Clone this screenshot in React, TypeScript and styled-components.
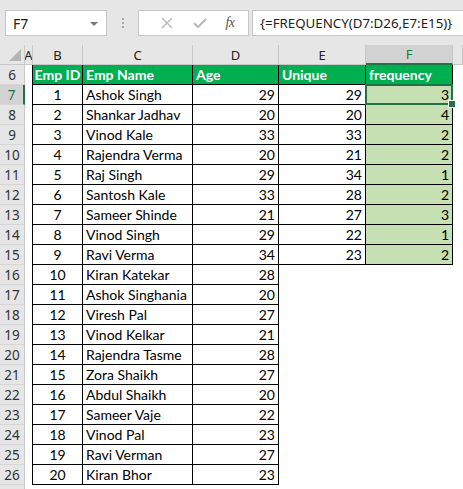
import React from 'react';
import styled, { createGlobalStyle, css } from 'styled-components';

const GlobalStyle = createGlobalStyle`
  html, body {
    margin: 0;
    padding: 0;
    background: #ffffff;
    overflow: hidden;
  }
  * {
    box-sizing: border-box;
  }
`;

const Page = styled.div`
  width: 463px;
  height: 489px;
  overflow: hidden;
  background: #ffffff;
  font-family: Lato, 'Liberation Sans', sans-serif;
`;

const TopBar = styled.div`
  height: 45px;
  background: #e6e6e6;
  display: flex;
  align-items: flex-start;
  padding: 10px 0 0 5px;
`;

const NameBox = styled.div`
  width: 102px;
  height: 26px;
  background: #ffffff;
  border: 1px solid #c6c6c6;
  display: flex;
  align-items: center;
  justify-content: space-between;
  padding: 0 8px 0 7px;
  font-family: 'Noto Sans', 'Open Sans', sans-serif;
  font-size: 14px;
  color: #222;
`;

const DropArrow = styled.span`
  width: 0;
  height: 0;
  border-left: 4px solid transparent;
  border-right: 4px solid transparent;
  border-top: 4px solid #777;
  margin-top: 1px;
`;

const Grip = styled.div`
  width: 31px;
  height: 26px;
  display: flex;
  flex-direction: column;
  align-items: center;
  justify-content: center;
  gap: 2px;
`;

const GripDot = styled.span`
  width: 2px;
  height: 2px;
  background: #a8a8a8;
`;

const ButtonBox = styled.div`
  width: 111px;
  height: 26px;
  background: #ffffff;
  border: 1px solid #c6c6c6;
  display: flex;
  align-items: center;
  padding-left: 12px;
`;

const IconSlot = styled.div<{ w: number }>`
  width: ${p => p.w}px;
  display: flex;
  align-items: center;
  justify-content: center;
`;

const Fx = styled.span`
  font-family: 'Liberation Serif', 'DejaVu Serif', serif;
  font-style: italic;
  font-size: 14px;
  color: #555;
  letter-spacing: -0.5px;
`;

const FormulaBox = styled.div`
  flex: 1;
  margin-left: 3px;
  height: 26px;
  background: #ffffff;
  border: 1px solid #c6c6c6;
  border-right: none;
  display: flex;
  align-items: center;
  padding-left: 7px;
  font-family: 'Noto Sans', 'Open Sans', sans-serif;
  font-size: 13.3px;
  color: #222;
  white-space: nowrap;
`;

const Grid = styled.div`
  display: grid;
  grid-template-columns: 25px 8px 50px 110px 86px 87px 87px 10px;
  grid-auto-rows: 20px;
`;

const ColHead = styled.div<{ active?: boolean }>`
  background: ${p => (p.active ? '#d2d2d2' : '#e6e6e6')};
  border-right: 1px solid #c9c9c9;
  border-bottom: ${p => (p.active ? '2px solid #217346' : '1px solid #c9c9c9')};
  color: ${p => (p.active ? '#217346' : '#222')};
  font-family: 'Noto Sans', 'Open Sans', sans-serif;
  font-size: 13px;
  display: flex;
  align-items: center;
  justify-content: center;
  overflow: hidden;
`;

const Corner = styled.div`
  background: #e6e6e6;
  border-right: 1px solid #c9c9c9;
  border-bottom: 1px solid #c9c9c9;
  position: relative;
  &::after {
    content: '';
    position: absolute;
    right: 3px;
    bottom: 3px;
    width: 0;
    height: 0;
    border-left: 12px solid transparent;
    border-bottom: 12px solid #b5b5b5;
  }
`;

const RowHead = styled.div<{ active?: boolean }>`
  background: ${p => (p.active ? '#d2d2d2' : '#e6e6e6')};
  border-bottom: 1px solid #d6d6d6;
  border-right: ${p => (p.active ? '2px solid #217346' : '1px solid #c9c9c9')};
  color: ${p => (p.active ? '#217346' : '#333')};
  font-family: 'Noto Sans', 'Open Sans', sans-serif;
  font-size: 13.5px;
  display: flex;
  align-items: center;
  justify-content: center;
`;

type Align = 'left' | 'center' | 'right';

const Cell = styled.div<{
  align?: Align;
  boxed?: boolean;
  head?: boolean;
  fill?: string;
  edge?: boolean;
  selected?: boolean;
}>`
  position: relative;
  display: flex;
  align-items: center;
  justify-content: ${p =>
    p.align === 'right' ? 'flex-end' : p.align === 'center' ? 'center' : 'flex-start'};
  padding: 0 3px;
  font-size: 14px;
  color: #000;
  white-space: nowrap;
  overflow: visible;
  background: ${p => p.fill || '#ffffff'};
  ${p =>
    p.boxed &&
    css`
      border-right: 1px solid #000;
      border-bottom: 1px solid #000;
    `}
  ${p =>
    p.edge &&
    css`
      border-right: 1px solid #000;
    `}
  ${p =>
    p.head &&
    css`
      background: #00b050;
      color: #ffffff;
      font-weight: 700;
    `}
  ${p =>
    p.selected &&
    css`
      &::before {
        content: '';
        position: absolute;
        left: -1px;
        top: -1px;
        right: -1px;
        bottom: -1px;
        border: 2px solid #217346;
        pointer-events: none;
      }
      &::after {
        content: '';
        position: absolute;
        right: -4px;
        bottom: -4px;
        width: 6px;
        height: 6px;
        background: #217346;
        border: 1px solid #ffffff;
        z-index: 2;
      }
    `}
`;

const Value = styled.span`
  position: relative;
  z-index: 1;
`;

const people: [number, string, number][] = [
  [1, 'Ashok Singh', 29],
  [2, 'Shankar Jadhav', 20],
  [3, 'Vinod Kale', 33],
  [4, 'Rajendra Verma', 20],
  [5, 'Raj Singh', 29],
  [6, 'Santosh Kale', 33],
  [7, 'Sameer Shinde', 21],
  [8, 'Vinod Singh', 29],
  [9, 'Ravi Verma', 34],
  [10, 'Kiran Katekar', 28],
  [11, 'Ashok Singhania', 20],
  [12, 'Viresh Pal', 27],
  [13, 'Vinod Kelkar', 21],
  [14, 'Rajendra Tasme', 28],
  [15, 'Zora Shaikh', 27],
  [16, 'Abdul Shaikh', 20],
  [17, 'Sameer Vaje', 22],
  [18, 'Vinod Pal', 23],
  [19, 'Ravi Verman', 27],
  [20, 'Kiran Bhor', 23],
];

const uniques = [29, 20, 33, 21, 34, 28, 27, 22, 23];
const freqs = [3, 4, 2, 2, 1, 2, 3, 1, 2];

const columns = ['A', 'B', 'C', 'D', 'E', 'F'];

const App: React.FC = () => {
  return (
    <Page>
      <GlobalStyle />
      <TopBar>
        <NameBox>
          <span>F7</span>
          <DropArrow />
        </NameBox>
        <Grip>
          <GripDot />
          <GripDot />
          <GripDot />
        </Grip>
        <ButtonBox>
          <IconSlot w={32}>
            <svg width="12" height="12" viewBox="0 0 12 12">
              <path d="M1 1 L11 11 M11 1 L1 11" stroke="#b8b8b8" strokeWidth="1.4" fill="none" />
            </svg>
          </IconSlot>
          <IconSlot w={34}>
            <svg width="14" height="12" viewBox="0 0 14 12">
              <path d="M1 6 L5 10 L13 2" stroke="#b8b8b8" strokeWidth="2" fill="none" />
            </svg>
          </IconSlot>
          <IconSlot w={26}>
            <Fx>fx</Fx>
          </IconSlot>
        </ButtonBox>
        <FormulaBox>{'{=FREQUENCY(D7:D26,E7:E15)}'}</FormulaBox>
      </TopBar>

      <Grid>
        <Corner />
        {columns.map(c => (
          <ColHead key={c} active={c === 'F'}>
            {c}
          </ColHead>
        ))}
        <ColHead />

        <RowHead>6</RowHead>
        <Cell edge />
        <Cell boxed head align="center">Emp ID</Cell>
        <Cell boxed head>Emp Name</Cell>
        <Cell boxed head>Age</Cell>
        <Cell boxed head>Unique</Cell>
        <Cell boxed head>frequency</Cell>
        <Cell />

        {people.map(([id, name, age], i) => {
          const inRange = i < uniques.length;
          return (
            <React.Fragment key={id}>
              <RowHead active={i === 0}>{i + 7}</RowHead>
              <Cell edge />
              <Cell boxed align="center">{id}</Cell>
              <Cell boxed>{name}</Cell>
              <Cell boxed align="right">{age}</Cell>
              {inRange ? (
                <>
                  <Cell boxed align="right">{uniques[i]}</Cell>
                  <Cell boxed align="right" fill="#c6e0b4" selected={i === 0}>
                    <Value>{freqs[i]}</Value>
                  </Cell>
                </>
              ) : (
                <>
                  <Cell />
                  <Cell />
                </>
              )}
              <Cell />
            </React.Fragment>
          );
        })}

        <RowHead />
      </Grid>
    </Page>
  );
};

export default App;
